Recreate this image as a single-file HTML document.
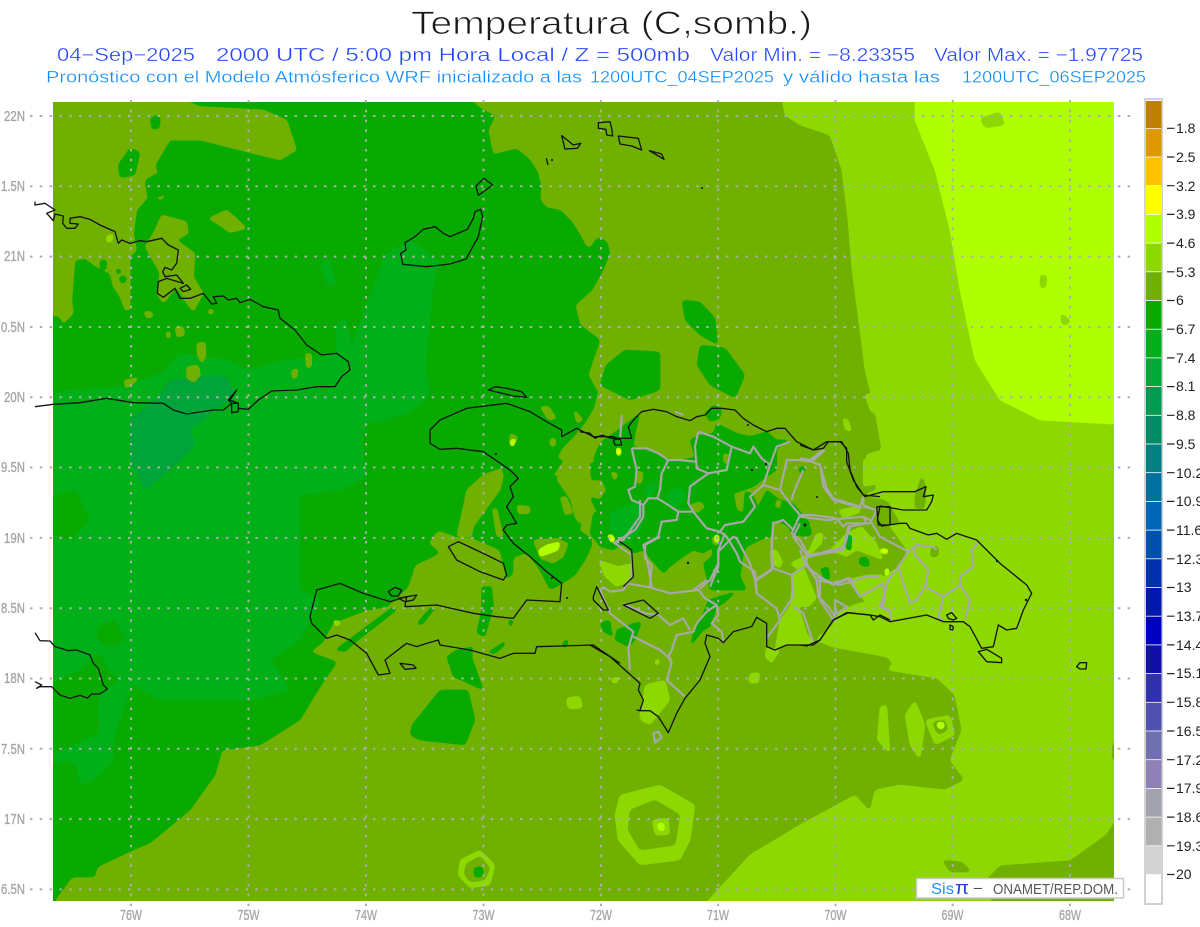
<!DOCTYPE html>
<html><head><meta charset="utf-8"><title>Temperatura</title>
<style>
html,body{margin:0;padding:0;background:#fff;width:1200px;height:927px;overflow:hidden}
svg{display:block}
text{font-family:"Liberation Sans",sans-serif}
.o{fill:#70b000}.g{fill:#08aa00}.m{fill:#00b018}.d{fill:#00a43a}.l{fill:#8cd800}.b{fill:#b0ff00}.y{fill:#ffff00}
.f polygon{filter:url(#r)}
.f .z polygon{filter:url(#r3)}
.f polygon.y{filter:none}
.k{fill:none;stroke:#141414;stroke-width:4;stroke-linejoin:round}
.p{fill:none;stroke:#a8a8a8;stroke-width:6.500;stroke-linejoin:round}
.t{fill:#a6a6a6;font-size:15px;stroke:#a6a6a6;stroke-width:.35}
.v{fill:#222;font-size:14px}
</style></head><body>
<svg width="1200" height="927" viewBox="0 0 1200 927" xmlns="http://www.w3.org/2000/svg">
<defs>
<clipPath id="c"><rect x="53" y="102" width="1061" height="799"/></clipPath>
<filter id="r" x="-50%" y="-50%" width="200%" height="200%" color-interpolation-filters="sRGB"><feGaussianBlur stdDeviation="2.2"/><feComponentTransfer><feFuncA type="linear" slope="10" intercept="-3.8"/></feComponentTransfer></filter>
<filter id="r3" x="-50%" y="-50%" width="200%" height="200%" color-interpolation-filters="sRGB"><feGaussianBlur stdDeviation="4.5"/><feComponentTransfer><feFuncA type="linear" slope="10" intercept="-3.5"/></feComponentTransfer></filter>
</defs>
<g clip-path="url(#c)" class="f">
<rect x="53" y="102" width="1061" height="799" class="o"/>
<!-- main -6 region -->
<polygon class="g" points="40,90 460,90 480,108 495,116 488,130 493,155 503,152 517,149 530,160 538,173 541,187 540,200 547,208 560,210 572,222 580,235 587,248 590,248 598,237 607,242 610,253 603,270 592,290 575,305 580,325 600,340 588,375 598,393 587,420 575,435 563,447 557,457 570,467 555,478 570,500 575,520 590,530 592,545 585,560 575,575 563,583 550,590 540,570 527,553 513,557 513,573 507,580 500,550 470,537 457,537 438,530 428,543 440,553 415,565 408,587 387,607 367,610 333,623 323,642 310,652 337,662 318,690 300,720 260,745 222,750 215,775 190,810 150,843 133,850 97,867 95,877 72,877 55,900 50,915 40,915"/>
<!-- -7 west zone -->
<polygon class="m" points="40,395 72,390 120,387 163,373 180,353 227,360 247,370 287,360 320,357 333,353 350,350 365,310 385,255 410,240 440,262 433,285 430,320 425,370 430,395 420,405 410,412 385,420 367,423 362,445 367,477 340,490 300,495 300,517 300,590 320,600 300,640 270,660 290,690 250,700 160,700 110,673 100,652 83,668 40,688"/>
<polygon class="g" points="300,512 333,507 360,517 350,547 333,550 300,530"/>
<polygon class="g" points="40,500 75,490 90,520 70,540 40,530"/>
<polygon class="m" points="45,755 58,753 100,733 98,713 100,693 120,680 147,650 170,655 130,690 113,740 113,760 100,773 90,783 80,783 77,767 70,760 45,765"/>
<polygon class="g" points="97,627 115,620 125,640 110,647 97,640"/>
<polygon class="d" points="130,420 160,395 170,380 225,375 235,395 215,410 190,430 195,445 170,470 145,490 130,460"/>
<!-- top-left olive patches -->
<g transform="translate(20,190) scale(.33333)" class="z">
<polygon class="o" points="70,-300 420,-300 540,-250 730,-240 800,-210 830,-120 780,-90 660,-120 540,-150 450,-150 405,-75 420,-15 385,0 385,20 350,60 340,130 350,180 330,200 330,310 330,360 315,360 300,320 280,290 270,250 230,230 195,205 165,210 155,330 160,370 130,400 118,380 70,370"/>
<polygon class="o" points="425,75 500,95 505,130 470,150 525,190 520,260 550,310 520,365 500,340 470,290 430,340 410,310 420,250 375,170 400,130"/>
<polygon class="o" points="565,85 620,60 650,85 680,115 630,128 590,100"/>
<polygon class="o" points="405,5 425,0 432,20 418,32"/>
<polygon class="o" points="370,365 395,365 400,380 380,385"/>
<polygon class="o" points="465,410 490,410 495,435 470,442"/>
<polygon class="o" points="438,425 452,425 450,445 440,445"/>
<polygon class="o" points="530,460 555,455 558,500 545,520 532,495"/>
<polygon class="o" points="500,530 535,525 542,555 522,578 500,565"/>
<polygon class="o" points="312,570 360,562 330,590 316,595"/>
<polygon class="o" points="855,490 875,490 875,530 860,535"/>
<polygon class="o" points="815,540 835,535 830,565 815,565"/>
<polygon class="o" points="565,358 580,358 580,372 565,372"/>
<polygon class="g" points="240,210 260,210 258,240 240,240"/>
<polygon class="g" points="290,235 305,240 300,252 288,250"/>
<polygon class="g" points="295,265 310,255 322,268 308,282"/>
<polygon class="l" points="258,140 280,130 276,155 260,158"/>
<polygon class="m" points="900,230 925,200 950,280 925,290"/>
<polygon class="m" points="950,400 975,385 990,440 990,500 950,490"/>
</g>
<polygon class="g" points="118,165 130,148 140,152 135,175 120,178"/>
<polygon class="g" points="145,180 160,172 165,195 148,200"/>
<polygon class="g" points="150,118 160,114 160,128 152,130"/>
<!-- wedges / Haiti olive patches (zoom 9 coords) -->
<g transform="translate(300,390) scale(.33333)" class="z">
<polygon class="o" points="490,350 500,300 550,255 605,235 610,260 600,300 520,410 515,440 470,440"/>
<polygon class="o" points="577,355 590,355 610,440 590,440"/>
<polygon class="o" points="720,50 745,48 770,85 745,90"/>
<polygon class="o" points="630,130 655,140 640,170 628,165"/>
<polygon class="o" points="750,145 768,145 765,170 750,168"/>
<polygon class="o" points="650,345 690,350 690,370 655,372"/>
<polygon class="o" points="780,320 800,320 820,370 795,375"/>
<polygon class="o" points="820,55 850,90 830,100"/>
<polygon class="o" points="700,450 770,445 805,460 790,500 760,520 720,505"/>
<polygon class="o" points="895,80 960,40 960,480 920,430 870,440 840,420 870,330 800,250 760,260 800,200 770,210 830,140"/>
<polygon class="g" points="870,220 900,210 910,270 875,270"/>
<polygon class="g" points="870,320 900,330 910,370 890,365"/>
<polygon class="g" points="925,350 960,330 960,420 920,430"/>
<polygon class="g" points="545,590 575,590 580,650 555,740 530,730 545,660"/>
<polygon class="g" points="350,700 395,650 405,655 365,705"/>
<polygon class="g" points="105,780 280,650 290,660 175,750 135,785"/>
<polygon class="g" points="440,800 470,780 520,770 515,800 550,900 460,860"/>
<polygon class="g" points="560,790 620,750 610,770 585,790"/>
<polygon class="g" points="785,765 800,745 805,760 795,775"/>
<polygon class="g" points="900,700 925,690 940,740 910,725"/>
<polygon class="g" points="625,690 640,690 635,710 628,708"/>
<polygon class="l" points="100,690 125,695 115,708 102,705"/>
<polygon class="b" points="715,480 740,465 780,455 775,480 750,490 720,500"/>
<polygon class="b" points="630,150 650,145 640,170 632,168"/>
<polygon class="l" points="935,865 960,860 950,880 935,878"/>
</g>
<polygon class="g" points="412,725 440,690 468,690 475,720 465,745 420,740 410,735"/>
<!-- north DR lumps -->
<polygon class="g" points="682,300 700,302 715,318 718,345 700,335 685,320"/>
<polygon class="g" points="700,345 725,348 745,375 735,398 710,385 697,365"/>
<polygon class="g" points="606,365 625,350 660,352 660,390 630,400 600,385"/>
<polygon class="g" points="540,350 560,345 565,375 545,380"/>
<!-- DR interior green -->
<g transform="translate(580,390) scale(.33333)" class="z">
<polygon class="g" points="140,100 180,70 165,130 160,170 210,180 260,205 300,210 330,205 345,200 330,150 360,135 400,130 410,100 440,115 470,130 510,140 560,125 590,150 630,150 590,175 590,240 560,260 520,290 460,310 470,360 490,370 495,305 515,310 530,340 525,370 560,300 600,330 640,340 665,370 690,400 680,430 640,440 625,410 600,395 580,390 580,440 550,445 500,470 490,490 480,560 500,600 390,600 370,520 395,500 400,470 370,490 340,480 310,500 270,530 250,550 215,510 190,480 160,490 130,460 100,480 60,470 30,430 40,370 60,360 30,320 60,330 80,300 60,260 40,210 50,180 70,150 100,130"/>
<polygon class="g" points="375,70 400,45 425,55 420,85 390,95"/>
<polygon class="g" points="0,0 55,0 40,55 20,90 0,60"/>
<polygon class="g" points="130,0 180,0 160,25"/>
<polygon class="m" points="90,370 140,345 190,345 190,400 160,450 130,450 90,420"/>
<polygon class="m" points="260,310 300,290 320,320 290,350 260,340"/>
<polygon class="m" points="190,300 220,270 230,300 205,330"/>
<polygon class="o" points="330,345 360,335 375,350 350,370"/>
<polygon class="o" points="430,190 450,195 445,225 430,215"/>
<polygon class="o" points="165,245 190,245 185,280 170,280"/>
<polygon class="o" points="90,245 115,250 105,275"/>
<polygon class="o" points="590,330 605,330 600,355 585,350"/>
<polygon class="o" points="395,440 420,440 415,465 400,465"/>
<polygon class="b" points="108,172 124,175 122,197 110,197"/>
<polygon class="y" points="112,180 120,180 120,192 113,192"/>
<polygon class="b" points="82,435 100,438 105,455 92,458"/>
<polygon class="y" points="90,440 100,445 98,455"/>
<polygon class="g" points="660,230 680,230 670,250 655,245"/>
<polygon class="g" points="725,535 745,530 750,570 730,565"/>
<polygon class="g" points="835,505 870,515 865,530 840,525"/>
<polygon class="l" points="788,82 805,90 815,125 795,120"/>
<polygon class="l" points="855,15 900,0 900,85 870,60"/>
<polygon class="l" points="850,210 900,180 900,280 850,290"/>
</g>
<!-- Light east -->
<polygon class="l" points="780,90 1130,90 1130,800 1105,835 1070,860 1000,865 985,880 995,915 695,915 750,855 800,825 855,795 870,812 875,790 900,785 945,790 965,780 950,760 962,730 955,695 937,678 917,675 887,670 893,663 887,657 833,647 815,640 833,625 840,610 860,603 882,597 883,577 902,565 907,550 880,512 888,505 887,500 862,495 877,490 872,473 865,455 882,450 880,440 875,410 865,370 860,330 852,270 848,220 842,170 830,135 800,125 785,115"/>
<polygon class="b" points="915,90 915,120 935,170 950,230 960,290 975,360 1000,400 1040,420 1130,425 1130,90"/>
<polygon class="l" points="980,118 1000,112 1005,125 985,128"/>
<polygon class="l" points="1040,275 1047,275 1046,288 1040,288"/>
<polygon class="l" points="1060,312 1072,322 1062,326"/>
<!-- zoom 7 light -->
<g transform="translate(590,500) scale(.33333)" class="z">
<polygon class="l" points="540,150 560,150 578,185 570,205 545,190"/>
<polygon class="l" points="610,225 640,200 680,295 655,320 625,320 650,400 670,430 590,435 555,450 570,360 600,320"/>
<polygon class="l" points="530,440 570,450 545,490 525,470"/>
<polygon class="l" points="480,520 510,518 505,550 475,548"/>
<polygon class="l" points="870,620 890,615 900,760 862,720"/>
<polygon class="l" points="25,180 85,200 125,190 125,240 80,260 45,230"/>
<polygon class="l" points="165,600 200,545 225,590 190,630 145,655"/>
<polygon class="l" points="600,190 650,165 680,100 700,100 695,130 660,165 630,215"/>
<polygon class="l" points="720,150 770,100 815,80 860,130 880,180 800,150 770,170"/>
<polygon class="l" points="770,240 830,225 880,225 900,290 850,340 815,290"/>
<polygon class="l" points="745,30 800,20 815,35 760,55"/>
<polygon class="l" points="195,480 210,475 205,495 195,495"/>
<polygon class="l" points="60,540 95,530 70,545"/>
<polygon class="g" points="805,175 830,170 840,195 815,195"/>
<polygon class="g" points="695,210 715,205 720,240 700,235"/>
<polygon class="g" points="765,120 782,118 785,150 770,150"/>
<polygon class="g" points="130,370 155,365 135,420 115,440 75,420 80,390"/>
<polygon class="g" points="30,370 60,360 65,400 45,400"/>
<polygon class="g" points="355,300 420,280 440,275 400,310 380,320 360,380 340,390 300,440 310,400 340,340"/>
<polygon class="b" points="50,105 68,103 78,125 60,122"/>
<polygon class="y" points="60,110 70,115 68,125"/>
<polygon class="b" points="372,105 388,105 385,130 375,128"/>
<polygon class="b" points="875,150 895,150 892,162 878,162"/>
<polygon class="b" points="885,205 895,205 893,230 885,228"/>
</g>
<!-- zoom 8 east detail -->
<g transform="translate(800,440) scale(.33333)" class="z">
<polygon class="o" points="345,170 365,108 378,140 375,190 372,205 345,205"/>
<polygon class="o" points="395,320 415,320 415,350 390,350"/>
<polygon class="o" points="240,215 260,180 300,250 240,260"/>
<polygon class="o" points="440,445 450,460 440,462"/>
<polygon class="g" points="175,355 195,350 212,378 190,380"/>
<polygon class="g" points="0,260 30,255 35,285 0,290"/>
<polygon class="g" points="60,385 85,382 90,420 70,410"/>
<polygon class="m" points="138,285 155,285 155,318 142,318"/>
<polygon class="b" points="240,325 268,328 258,342 242,340"/>
<polygon class="y" points="248,328 260,332 250,338"/>
<polygon class="b" points="255,385 268,385 265,408 256,405"/>
</g>
<!-- south rings -->
<polygon class="l" points="460,860 480,850 495,865 490,885 470,888 458,875"/>
<polygon class="o" points="466,864 480,856 490,868 485,880 470,882 464,874"/>
<polygon class="g" points="473,868 482,866 484,876 475,878"/>
<polygon class="l" points="620,795 660,785 695,805 690,840 680,860 640,865 618,840 615,815"/>
<polygon class="o" points="630,810 655,800 680,815 675,845 640,850 628,830"/>
<polygon class="l" points="652,820 668,818 670,835 655,835"/>
<polygon class="b" points="657,822 665,824 664,832 658,830"/>
<polygon class="l" points="645,685 665,680 670,700 650,725 640,720"/>
<polygon class="l" points="905,715 915,700 925,725 920,760 910,745"/>
<polygon class="l" points="925,720 950,715 955,735 935,745"/>
<polygon class="o" points="932,722 945,720 948,730 938,735"/>
<polygon class="b" points="936,722 945,722 944,729 938,729"/>
<polygon class="o" points="1113,735 1120,760 1112,760"/>
<polygon class="o" points="942,860 962,862 972,872 950,872"/>
<polygon class="l" points="566,698 580,696 583,708 568,709"/>
</g>
<!-- grid -->
<g stroke="#aeaeae" stroke-width="2" stroke-dasharray="2.500 7.300" fill="none">
<path d="M30 116H1134M30 186.300H1134M30 256.600H1134M30 327H1134M30 397.200H1134M30 467.500H1134M30 537.900H1134M30 608.200H1134M30 678.500H1134M30 748.800H1134M30 819.100H1134M30 889.400H1134"/>
<path d="M131 100V908M248.500 100V908M366 100V908M483.500 100V908M601 100V908M718.200 100V908M835.500 100V908M952.700 100V908M1070 100V908"/>
</g>
<!-- islands, zoom 11 -->
<g transform="translate(390,110) scale(.33333)" class="k">
<polygon points="272,298 255,305 250,325 232,358 180,380 160,370 135,350 100,358 75,380 45,398 48,420 32,430 38,463 110,470 180,462 228,447 265,380 278,320"/>
<polygon points="282,205 308,225 265,256 258,228"/>
<polygon points="515,77 550,105 572,100 562,115 525,117"/>
<polygon points="625,38 660,35 665,55 668,78 650,75 648,58 625,55"/>
<polygon points="685,78 745,85 755,120 725,108 690,102"/>
<polygon points="778,122 815,132 822,148 795,132"/>
<polyline points="469,145 474,165"/>
</g>
<!-- Cuba, zoom 10 -->
<g transform="translate(20,190) scale(.33333)" class="k">
<polyline points="45,35 45,45 75,40 105,60 80,70 100,92 105,72 130,78 128,100 140,115 165,115 175,102 150,100 150,85 180,80 210,88 240,105 285,125 295,160 305,150 330,160 360,152 380,155 425,145 445,165 475,180 470,220 455,240 435,232 428,245 435,260 470,255 490,280 440,265 415,275 412,310 430,322 465,295 480,325 510,325 550,310 575,342 590,340 580,320 610,318 625,330 650,325 660,338 690,328 730,350 775,360 780,385 825,420 860,465 905,495 950,490 985,515 990,540 965,560 945,590 890,590 830,600 755,603 715,630 685,658 655,655 655,640 630,630 650,600 625,630 635,640 610,660 580,660 500,672 460,660 430,640 340,638 260,625 180,638 100,643 45,650"/>
<polygon points="480,295 500,285 512,298 490,305"/>
<polygon points="635,668 655,665 655,640 635,640"/>
</g>
<!-- Jamaica, zoom 12 -->
<g transform="translate(0,620) scale(.33333)" class="k">
<polyline points="105,38 120,62 150,63 165,80 205,92 230,90 270,105 280,130 295,145 310,195 322,207 300,222 275,222 262,234 240,226 210,235 180,225 155,200 120,200 110,205 125,195 105,185"/>
</g>
<!-- Gray provinces, zoom 6 -->
<g transform="translate(580,390) scale(.33333)" class="p">
<polyline points="155,175 170,240 165,290 145,300 155,330 190,345 190,380 165,420 100,460"/>
<polyline points="155,175 200,175 235,190 265,210 300,210 345,215"/>
<polyline points="265,210 245,250 240,300 232,325 205,325 190,345"/>
<polyline points="232,325 265,345 295,365 340,365 380,415 420,425 435,405 490,395 525,350 510,320 550,285 570,225 590,170 630,155"/>
<polyline points="355,125 345,170 350,235 385,250 440,240 455,170 510,190 520,170 545,205 570,225"/>
<polyline points="355,125 400,140 455,170"/>
<polyline points="385,250 330,290 325,340 340,365"/>
<polyline points="295,365 290,390 245,395 235,440 190,465 205,530 215,590"/>
<polyline points="550,285 600,300 620,210 660,210 695,215 720,225 740,295 760,325 840,350 850,320"/>
<polyline points="695,215 735,180"/>
<polyline points="600,300 630,340 660,375 635,430 660,450 690,500"/>
<polyline points="670,240 640,310 635,330"/>
<polyline points="660,375 700,375 770,385 790,410 800,400 870,400 890,360 850,350"/>
<polyline points="435,430 415,480 415,530 390,590"/>
<polyline points="420,425 440,440 470,490 480,515 525,545 530,600"/>
<polyline points="530,570 575,540 575,450 580,400 610,390 640,420"/>
<polyline points="690,500 750,480 790,480 810,410"/>
<polyline points="680,520 710,570 780,585 860,560 900,560"/>
<polyline points="380,570 340,600"/>
<polyline points="120,155 125,75"/>
<polyline points="285,65 310,75"/>
</g>
<!-- Gray zoom 7 -->
<g transform="translate(590,500) scale(.33333)" class="p">
<polyline points="150,0 150,50 100,120 75,130 125,165 125,230 100,270 60,275 40,262 30,270 60,340 130,395 115,445 120,510"/>
<polyline points="110,250 180,262 240,280 325,270 360,240 385,190"/>
<polyline points="180,262 185,195 165,175 165,135 210,110"/>
<polyline points="325,270 345,295 380,315 385,345 365,370 395,395 400,425"/>
<polyline points="380,315 350,335 320,370 310,395 260,405 245,450 235,470 245,490 230,540 285,590"/>
<polyline points="100,310 165,340 205,345 240,375 280,355 300,390"/>
<polyline points="130,410 210,450 245,480"/>
<polyline points="495,240 500,280 560,325 570,360 530,415"/>
<polyline points="495,240 550,205 605,225 610,290 570,350"/>
<polyline points="610,320 640,340 670,430"/>
<polyline points="650,195 605,225"/>
<polyline points="650,195 680,240 685,290 715,320 735,350 735,300 770,320"/>
<polyline points="680,230 730,250 775,235 810,290 880,250 885,300 875,320 900,330"/>
<polyline points="650,165 610,110 630,70"/>
<polyline points="650,165 720,155 760,140 775,90"/>
<polyline points="650,165 650,195"/>
<polyline points="550,205 545,150 550,65"/>
<polyline points="495,240 480,190 440,115 430,110 385,155 385,195 370,215"/>
<polygon points="190,700 205,695 215,712 195,728"/>
</g>
<!-- Gray zoom 8 -->
<g transform="translate(800,440) scale(.33333)" class="p">
<polyline points="190,170 190,195 225,210"/>
<polyline points="60,70 70,140 100,180 185,205"/>
<polyline points="0,55 30,60 70,30"/>
<polyline points="210,240 240,290 325,335 295,380 265,420 250,470 240,500 270,515 272,545"/>
<polyline points="325,335 350,315 400,320 410,330"/>
<polyline points="345,320 345,345 385,390 375,440 350,480 330,490 310,430 295,380"/>
<polyline points="375,440 430,470 415,530 430,545"/>
<polyline points="430,470 480,435 510,480 495,540"/>
<polyline points="480,435 480,410 520,380 515,330 535,308"/>
<polyline points="250,430 180,470 150,415 100,435 60,410 20,380"/>
<polyline points="20,380 0,330"/>
<polyline points="60,410 60,480 100,540"/>
<polyline points="20,350 130,330 145,260 200,250 190,230 80,240 0,230"/>
<polyline points="190,230 210,240"/>
<polyline points="105,490 110,520 145,500"/>
</g>
<!-- Coast zoom 6 -->
<g transform="translate(580,390) scale(.33333)" class="k">
<polyline points="0,125 30,130 45,145 65,135 95,145 125,145 155,145 145,110 165,85 185,65 220,58 260,65 290,80 330,92 350,80 375,75 395,55 425,55 465,60 490,85 520,105 560,125 590,115 615,115 650,155 700,180 730,175 745,155 780,155 800,175 800,215 820,270 850,315 900,320"/>
<polyline points="100,150 120,145 125,165 105,165 100,150"/>
<polyline points="155,480 120,455 155,480 160,560 130,590"/>
</g>
<!-- Coast zoom 8 -->
<g transform="translate(800,440) scale(.33333)" class="k">
<polyline points="0,15 40,30 80,5 125,5 145,40 150,90 170,140 195,170 250,155 300,155 345,155 378,140 370,170 400,165 395,185 380,210 310,210 240,198 232,240 245,258 300,250 320,250 330,265 385,285 410,280 440,298 470,280 530,300 600,370 680,435 695,460 670,510 650,565 620,570 595,555 580,620 545,625 510,560 490,545 430,545 380,525 270,545 240,530 210,525 140,518 100,540 60,600 20,618 0,615"/>
<polygon points="535,635 560,628 605,655 605,668 560,665"/>
<polygon points="830,680 840,668 860,668 858,687 840,687"/>
<polygon points="440,525 455,518 470,535 460,540 445,535"/>
<polygon points="450,555 460,560 458,570 450,568"/>
</g>
<!-- Coast zoom 7 -->
<g transform="translate(590,500) scale(.33333)" class="k">
<polyline points="900,360 870,345 850,360 840,345 775,338 730,360 690,420 670,435 590,435 555,450 530,440 530,370 500,352 485,380 430,395 400,428 385,415 350,405 345,430 360,470 330,540 285,595 260,640 235,698 205,650 180,632 150,632 160,600 145,570 150,550 105,510 60,470 0,435"/>
<polyline points="150,632 140,630"/>
<polygon points="10,290 20,260 50,320 55,330 40,330 10,300"/>
<polygon points="100,315 160,300 205,340 180,355 130,330"/>
<polyline points="860,20 900,20 900,75 865,75 860,20"/>
</g>
<!-- Coast zoom 9 -->
<g transform="translate(300,390) scale(.33333)" class="k">
<polyline points="960,820 880,765 710,770 705,790 640,790 600,805 510,780 420,765 415,750 380,760 350,770 320,760 300,775 255,810 270,850 235,855 200,790 150,750 110,735 80,745 35,700 30,680 50,600 120,580 190,610 270,635 320,620 315,650 410,645 520,670 590,680 640,685 680,630 780,635 785,580 740,545 690,500 640,460 610,420 620,405 650,400 620,350 640,320 630,290 655,265 630,240 550,185 470,175 420,178 390,160 390,120 420,90 500,55 620,40 690,65 740,95 785,120 785,140 830,115 880,140 940,140 960,150"/>
<polygon points="445,470 475,455 560,495 610,520 620,555 610,570 540,545 470,510"/>
<polygon points="565,0 640,18 680,22 665,5 620,-5 585,-10"/>
<polygon points="265,605 285,592 305,600 295,618 275,618"/>
<polygon points="300,820 340,825 348,835 315,838"/>
<polygon points="295,625 350,615 340,630 315,635"/>
</g>
<!-- black specks -->
<g fill="#111">
<circle cx="688" cy="563" r="1.200"/><circle cx="997" cy="561" r="1.200"/><circle cx="1026" cy="600" r="1.200"/><circle cx="805" cy="525" r="1.500"/><circle cx="748" cy="425" r="1"/><circle cx="766" cy="464" r="1.200"/><circle cx="752" cy="470" r="1.200"/><circle cx="817" cy="497" r="1"/><circle cx="702" cy="188" r="1"/><circle cx="552" cy="160" r="1"/><circle cx="496" cy="454" r="1"/><circle cx="552" cy="578" r="1"/><circle cx="567" cy="598" r="1"/>
</g>
<!-- axis labels -->
<g class="t">
<text x="4" y="121" textLength="21" lengthAdjust="spacingAndGlyphs">22N</text>
<text x="1" y="191" textLength="24" lengthAdjust="spacingAndGlyphs">1.5N</text>
<text x="4" y="261" textLength="21" lengthAdjust="spacingAndGlyphs">21N</text>
<text x="1" y="332" textLength="24" lengthAdjust="spacingAndGlyphs">0.5N</text>
<text x="4" y="402" textLength="21" lengthAdjust="spacingAndGlyphs">20N</text>
<text x="1" y="472" textLength="24" lengthAdjust="spacingAndGlyphs">9.5N</text>
<text x="4" y="543" textLength="21" lengthAdjust="spacingAndGlyphs">19N</text>
<text x="1" y="613" textLength="24" lengthAdjust="spacingAndGlyphs">8.5N</text>
<text x="4" y="683" textLength="21" lengthAdjust="spacingAndGlyphs">18N</text>
<text x="1" y="754" textLength="24" lengthAdjust="spacingAndGlyphs">7.5N</text>
<text x="4" y="824" textLength="21" lengthAdjust="spacingAndGlyphs">17N</text>
<text x="1" y="894" textLength="24" lengthAdjust="spacingAndGlyphs">6.5N</text>
</g>
<g class="t">
<text x="120" y="920" textLength="22" lengthAdjust="spacingAndGlyphs">76W</text>
<text x="237.500" y="920" textLength="22" lengthAdjust="spacingAndGlyphs">75W</text>
<text x="355" y="920" textLength="22" lengthAdjust="spacingAndGlyphs">74W</text>
<text x="472.500" y="920" textLength="22" lengthAdjust="spacingAndGlyphs">73W</text>
<text x="590" y="920" textLength="22" lengthAdjust="spacingAndGlyphs">72W</text>
<text x="707" y="920" textLength="22" lengthAdjust="spacingAndGlyphs">71W</text>
<text x="824.500" y="920" textLength="22" lengthAdjust="spacingAndGlyphs">70W</text>
<text x="941.500" y="920" textLength="22" lengthAdjust="spacingAndGlyphs">69W</text>
<text x="1059" y="920" textLength="22" lengthAdjust="spacingAndGlyphs">68W</text>
</g>
<!-- Titles -->
<text x="411" y="34" font-size="32" textLength="401" lengthAdjust="spacingAndGlyphs" fill="#1a1a1a" stroke="#fff" stroke-width=".8">Temperatura (C,somb.)</text>
<g font-size="18.500" fill="#2244ff" stroke="#fff" stroke-width=".35">
<text x="57" y="61" textLength="138" lengthAdjust="spacingAndGlyphs">04−Sep−2025</text>
<text x="216" y="61" textLength="474" lengthAdjust="spacingAndGlyphs">2000 UTC / 5:00 pm Hora Local / Z = 500mb</text>
<text x="710" y="61" textLength="205" lengthAdjust="spacingAndGlyphs">Valor Min. = −8.23355</text>
<text x="934" y="61" textLength="209" lengthAdjust="spacingAndGlyphs">Valor Max. = −1.97725</text>
</g>
<g font-size="16.500" fill="#0a8cff" stroke="#fff" stroke-width=".3">
<text x="46" y="82.500" textLength="536" lengthAdjust="spacingAndGlyphs">Pronóstico con el Modelo Atmósferico WRF inicializado a las</text>
<text x="590" y="82.500" textLength="184" lengthAdjust="spacingAndGlyphs">1200UTC_04SEP2025</text>
<text x="783" y="82.500" textLength="157" lengthAdjust="spacingAndGlyphs">y válido hasta las</text>
<text x="962" y="82.500" textLength="184" lengthAdjust="spacingAndGlyphs">1200UTC_06SEP2025</text>
</g>
<!-- credit box -->
<rect x="916.500" y="878.500" width="207" height="19.500" fill="#fff" stroke="#c8c8c8" stroke-width="1.500"/>
<text x="931" y="894" font-size="15.500" fill="#1e90ff" textLength="23" lengthAdjust="spacingAndGlyphs">Sis</text>
<text x="955" y="894" font-size="18" fill="#2244dd" textLength="14" lengthAdjust="spacingAndGlyphs">π</text>
<text x="973" y="893" font-size="14" fill="#444" textLength="10" lengthAdjust="spacingAndGlyphs">−</text>
<text x="993" y="894" font-size="15" fill="#555" textLength="125" lengthAdjust="spacingAndGlyphs">ONAMET/REP.DOM.</text>
<!-- legend -->
<rect x="1145" y="99" width="17" height="805" fill="#fff" stroke="#d2d2d2" stroke-width="2"/>
<g>
<rect x="1146" y="101" width="15.500" height="27" fill="#bf7f00"/>
<rect x="1146" y="128.700" width="15.500" height="27.900" fill="#df9900"/>
<rect x="1146" y="157.400" width="15.500" height="27.900" fill="#ffc000"/>
<rect x="1146" y="186.100" width="15.500" height="27.900" fill="#ffff00"/>
<rect x="1146" y="214.800" width="15.500" height="27.900" fill="#b0ff00"/>
<rect x="1146" y="243.500" width="15.500" height="27.900" fill="#8cd800"/>
<rect x="1146" y="272.200" width="15.500" height="27.900" fill="#70b000"/>
<rect x="1146" y="300.900" width="15.500" height="27.900" fill="#08aa00"/>
<rect x="1146" y="329.600" width="15.500" height="27.900" fill="#00b018"/>
<rect x="1146" y="358.300" width="15.500" height="27.900" fill="#00a838"/>
<rect x="1146" y="387" width="15.500" height="27.900" fill="#009a50"/>
<rect x="1146" y="415.700" width="15.500" height="27.900" fill="#008c64"/>
<rect x="1146" y="444.400" width="15.500" height="27.900" fill="#008080"/>
<rect x="1146" y="473.100" width="15.500" height="27.900" fill="#0070a0"/>
<rect x="1146" y="501.800" width="15.500" height="27.900" fill="#0066b8"/>
<rect x="1146" y="530.500" width="15.500" height="27.900" fill="#0050b0"/>
<rect x="1146" y="559.200" width="15.500" height="27.900" fill="#0030b0"/>
<rect x="1146" y="587.900" width="15.500" height="27.900" fill="#0018b0"/>
<rect x="1146" y="616.600" width="15.500" height="27.900" fill="#0000c0"/>
<rect x="1146" y="645.300" width="15.500" height="27.900" fill="#1010a8"/>
<rect x="1146" y="674" width="15.500" height="27.900" fill="#3030b0"/>
<rect x="1146" y="702.700" width="15.500" height="27.900" fill="#5050b0"/>
<rect x="1146" y="731.400" width="15.500" height="27.900" fill="#7070b0"/>
<rect x="1146" y="760.100" width="15.500" height="27.900" fill="#9080b8"/>
<rect x="1146" y="788.800" width="15.500" height="27.900" fill="#a3a3b0"/>
<rect x="1146" y="817.500" width="15.500" height="27.900" fill="#b0b0b0"/>
<rect x="1146" y="846.200" width="15.500" height="28" fill="#d3d3d3"/>
</g>
<g stroke="#222" stroke-width="1.200">
<path d="M1167 128.300h7.500M1167 157h7.500M1167 185.700h7.500M1167 214.400h7.500M1167 243.100h7.500M1167 271.800h7.500M1167 300.500h7.500M1167 329.200h7.500M1167 357.900h7.500M1167 386.600h7.500M1167 415.300h7.500M1167 444h7.500M1167 472.700h7.500M1167 501.400h7.500M1167 530.100h7.500M1167 558.800h7.500M1167 587.500h7.500M1167 616.200h7.500M1167 644.900h7.500M1167 673.600h7.500M1167 702.300h7.500M1167 731h7.500M1167 759.700h7.500M1167 788.400h7.500M1167 817.100h7.500M1167 845.800h7.500M1167 874.500h7.500"/>
</g>
<g class="v">
<text x="1176" y="133">1.8</text><text x="1176" y="162">2.5</text><text x="1176" y="191">3.2</text><text x="1176" y="219">3.9</text><text x="1176" y="248">4.6</text><text x="1176" y="277">5.3</text><text x="1176" y="305">6</text><text x="1176" y="334">6.7</text><text x="1176" y="363">7.4</text><text x="1176" y="391">8.1</text><text x="1176" y="420">8.8</text><text x="1176" y="449">9.5</text><text x="1176" y="478">10.2</text><text x="1176" y="506">10.9</text><text x="1176" y="535">11.6</text><text x="1176" y="564">12.3</text><text x="1176" y="592">13</text><text x="1176" y="621">13.7</text><text x="1176" y="650">14.4</text><text x="1176" y="678">15.1</text><text x="1176" y="707">15.8</text><text x="1176" y="736">16.5</text><text x="1176" y="765">17.2</text><text x="1176" y="793">17.9</text><text x="1176" y="822">18.6</text><text x="1176" y="851">19.3</text><text x="1176" y="879">20</text>
</g>
</svg>
</body></html>
